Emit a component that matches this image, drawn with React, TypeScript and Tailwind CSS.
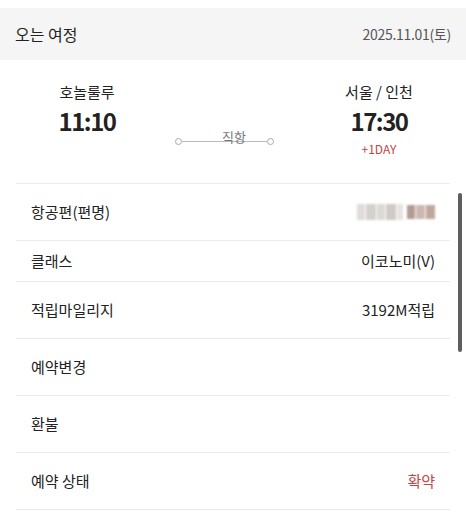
import React from 'react';

const FONT = "font-['Noto_Sans_CJK_KR','Noto_Sans',sans-serif]";

type Row = { label: string; value?: React.ReactNode; h: string };

const BlurredFlightNo: React.FC = () => (
  <div className="flex items-center gap-[4px] blur-[1px]">
    <div className="flex gap-[1px]">
      <span className="w-[8px] h-[16px] bg-[#e0dcd9]" />
      <span className="w-[10px] h-[16px] bg-[#d4d0cc]" />
      <span className="w-[8px] h-[16px] bg-[#dcd8d4]" />
      <span className="w-[10px] h-[16px] bg-[#cfcac6]" />
      <span className="w-[6px] h-[16px] bg-[#e6e3e0]" />
    </div>
    <div className="flex gap-[1px]">
      <span className="w-[8px] h-[14px] bg-[#b39b93]" />
      <span className="w-[9px] h-[14px] bg-[#cbb8b1]" />
      <span className="w-[9px] h-[14px] bg-[#bfa79f]" />
    </div>
  </div>
);

const rows: Row[] = [
  { label: '항공편(편명)', value: <BlurredFlightNo />, h: 'h-[57px]' },
  { label: '클래스', value: '이코노미(V)', h: 'h-[41px]' },
  { label: '적립마일리지', value: '3192M적립', h: 'h-[57px]' },
  { label: '예약변경', h: 'h-[57px]' },
  { label: '환불', h: 'h-[57px]' },
  { label: '예약 상태', value: <span className="text-[#c8423f]">확약</span>, h: 'h-[57px]' },
];

export default function App() {
  return (
    <div className={`relative w-[466px] h-[527px] bg-white overflow-hidden ${FONT}`}>
      <div className="h-[8px]" />
      {/* section header */}
      <div className="h-[52px] bg-[#f5f5f5] flex items-center justify-between pl-[15px] pr-[15px]">
        <span className="text-[16px] text-[#222]">오는 여정</span>
        <span className="text-[14px] tracking-[-0.3px] text-[#555]">2025.11.01(토)</span>
      </div>

      {/* flight times */}
      <div className="mx-[16px] border-b border-[#ebebeb] pt-[22px] pb-[26px] flex items-start">
        <div className="ml-[14px] w-[114px] flex flex-col items-center">
          <span className="text-[15px] leading-[20px] text-[#222]">호놀룰루</span>
          <span className="mt-[4px] text-[24px] leading-[30px] font-semibold tracking-[-1.5px] text-[#222]">11:10</span>
        </div>
        <div className="relative mt-[56px] ml-[31px] w-[99px] h-[7px] flex items-center">
          <span className="w-[7px] h-[7px] rounded-full border border-[#aaa] bg-white" />
          <span className="flex-1 h-px bg-[#bbb]" />
          <span className="w-[7px] h-[7px] rounded-full border border-[#aaa] bg-white" />
          <span className="absolute top-[-9px] left-[47px] text-[13px] leading-[16px] text-[#777]">직항</span>
        </div>
        <div className="ml-auto mr-[14px] w-[114px] flex flex-col items-center">
          <span className="text-[15px] leading-[20px] text-[#222]">서울 / 인천</span>
          <span className="mt-[4px] text-[24px] leading-[30px] font-semibold tracking-[-1.5px] text-[#222]">17:30</span>
          <span className="mt-[5px] text-[12px] leading-[16px] text-[#c8423f]">+1DAY</span>
        </div>
      </div>

      {/* detail rows */}
      <div className="mx-[16px]">
        {rows.map(r => (
          <div key={r.label} className={`${r.h} border-b border-[#ebebeb] flex items-center justify-between px-[15px]`}>
            <span className="text-[15px] text-[#222]">{r.label}</span>
            {r.value && <span className="text-[15px] text-[#222]">{r.value}</span>}
          </div>
        ))}
      </div>

      {/* scrollbar */}
      <div className="absolute right-[4px] top-[193px] w-[4px] h-[159px] rounded-full bg-[#5e5e5e]" />
    </div>
  );
}
